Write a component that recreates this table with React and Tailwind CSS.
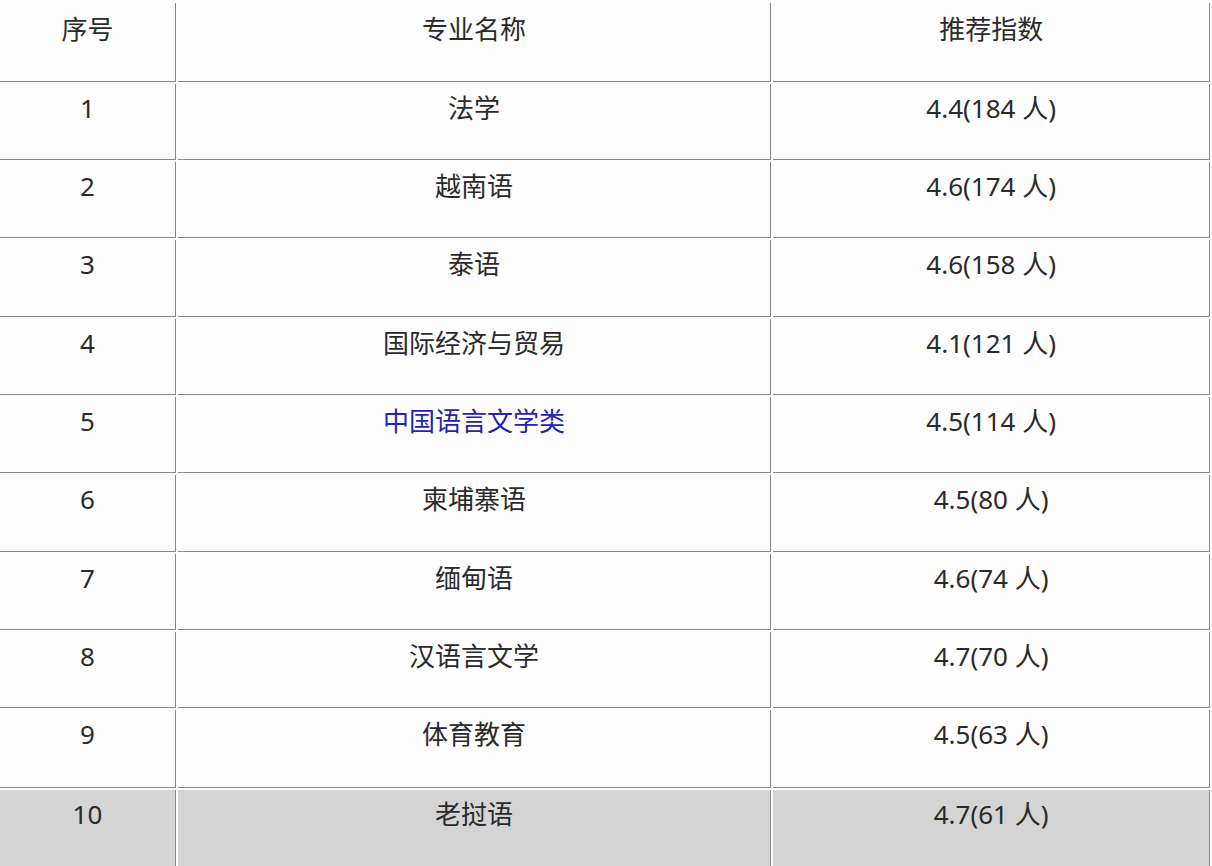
import React from "react";

const rows = [
  { no: "1", name: "法学", score: "4.4(184 人)", h: "h-[76px]" },
  { no: "2", name: "越南语", score: "4.6(174 人)", h: "h-[76px]" },
  { no: "3", name: "泰语", score: "4.6(158 人)", h: "h-[77px]" },
  { no: "4", name: "国际经济与贸易", score: "4.1(121 人)", h: "h-[76px]" },
  { no: "5", name: "中国语言文学类", score: "4.5(114 人)", h: "h-[76px]", link: true },
  { no: "6", name: "柬埔寨语", score: "4.5(80 人)", h: "h-[77px]" },
  { no: "7", name: "缅甸语", score: "4.6(74 人)", h: "h-[76px]" },
  { no: "8", name: "汉语言文学", score: "4.7(70 人)", h: "h-[76px]" },
  { no: "9", name: "体育教育", score: "4.5(63 人)", h: "h-[78px]" },
  { no: "10", name: "老挝语", score: "4.7(61 人)", h: "h-[78px]", gray: true },
];

const Cell = ({ children, className = "", h, pad = "pt-[8px]" }) => (
  <td
    className={`${h} p-0 align-top text-center border-b border-r border-[#888888] ${className}`}
  >
    <div className={`${pad} leading-[32px]`}>{children}</div>
  </td>
);

const App = () => {
  return (
    <div
      className="w-[1212px] h-[866px] overflow-hidden bg-[#fdfdfd] text-[26px] text-[#2a2a2a]"
      style={{ fontFamily: '"Noto Sans", "Noto Sans CJK SC", sans-serif' }}
    >
      <table className="-ml-[2px] border-separate border-spacing-x-[2px] border-spacing-y-[2px] mt-[1px]">
        <colgroup>
          <col className="w-[176px]" />
          <col className="w-[594px]" />
          <col className="w-[437px]" />
        </colgroup>
        <tbody>
          <tr>
            <Cell h="h-[79px]" pad="pt-[10px]">序号</Cell>
            <Cell h="h-[79px]" pad="pt-[10px]">专业名称</Cell>
            <Cell h="h-[79px]" pad="pt-[10px]">推荐指数</Cell>
          </tr>
          {rows.map((r) => (
            <tr key={r.no} className={r.gray ? "bg-[#d4d4d4]" : ""}>
              <Cell h={r.h}>{r.no}</Cell>
              <Cell h={r.h} className={r.link ? "text-[#2323b4]" : ""}>
                {r.name}
              </Cell>
              <Cell h={r.h}>{r.score}</Cell>
            </tr>
          ))}
        </tbody>
      </table>
    </div>
  );
};

export default App;
